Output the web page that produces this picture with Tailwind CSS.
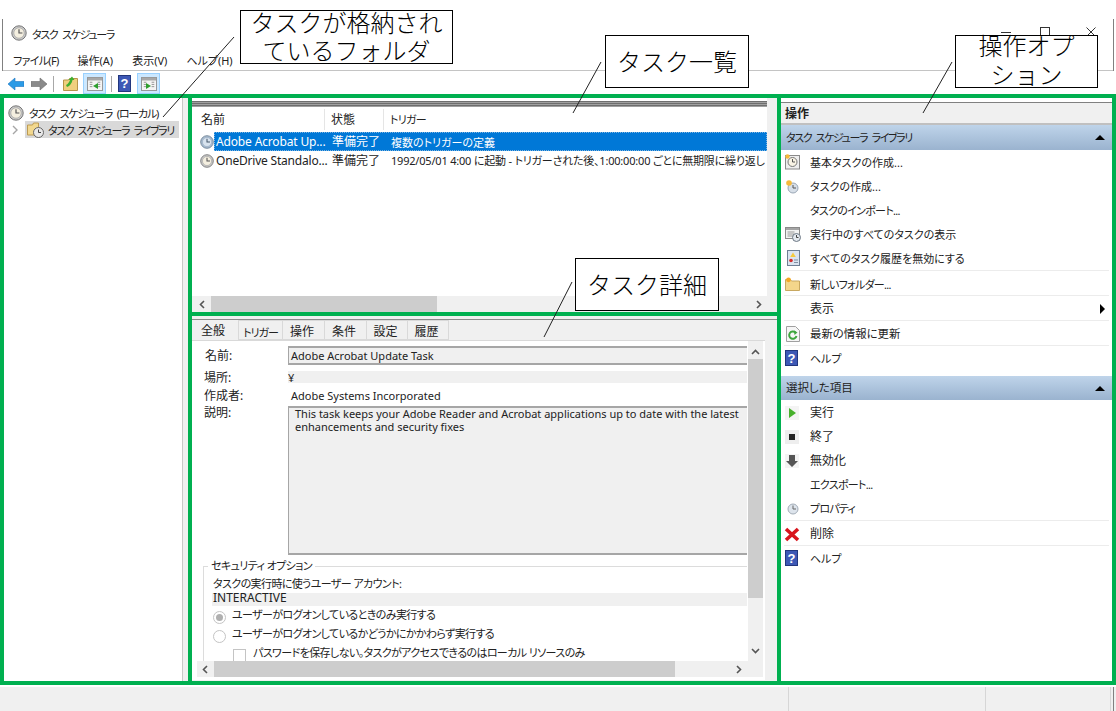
<!DOCTYPE html>
<html lang="ja">
<head>
  <meta charset="UTF-8">
  <title>タスク スケジューラ</title>
  <script src="https://cdn.jsdelivr.net/npm/@tailwindcss/browser@4"></script>
</head>
<body class="relative w-[1116px] h-[711px] overflow-hidden bg-white text-[11px] leading-none text-[#222] font-['Noto_Sans','Noto_Sans_CJK_JP',sans-serif] [font-feature-settings:'palt']">

  <!-- shared icons -->
  <svg class="hidden">
    <symbol id="clock" viewBox="0 0 16 16">
      <circle cx="8" cy="8" r="7.2" fill="#c9c9c9" stroke="#777"/>
      <circle cx="8" cy="8" r="5.2" fill="#f4efe0" stroke="#999" stroke-width=".6"/>
      <path d="M8 4.200V8h3.400" fill="none" stroke="#555" stroke-width="1.200"/>
    </symbol>
    <symbol id="clock-blue" viewBox="0 0 16 16">
      <circle cx="8" cy="8" r="7.2" fill="#a9bdd2" stroke="#6f8194"/>
      <circle cx="8" cy="8" r="5.2" fill="#d8e3ee" stroke="#8fa3b8" stroke-width=".6"/>
      <path d="M8 4.200V8h3.400" fill="none" stroke="#46586b" stroke-width="1.200"/>
    </symbol>
    <symbol id="pane" viewBox="0 0 18 16">
      <rect x=".5" y=".5" width="17" height="15" fill="#f4f4f4" stroke="#8c8c8c"/>
      <rect x="1" y="1" width="16" height="3" fill="#a8a8a8"/>
      <path d="M3 6h3M3 8.500h3M3 11h3M12 6h3M12 8.500h3M12 11h3" stroke="#8a8a8a"/>
    </symbol>
  </svg>

  <!-- title + menu -->
  <div class="mt-[19px] mx-[2px] border-x border-[#808080]">
    <div class="h-[28px] pl-[8px] flex items-center gap-[5px]">
      <svg class="w-[16px] h-[16px]"><use href="#clock"/></svg>
      <span class="pt-[2px] tracking-[-1.3px] [word-spacing:3px]">タスク スケジューラ</span>
      <div class="ml-auto mr-[17px] mb-[2px] flex items-center">
        <div class="w-[10px] h-px bg-[#333]"></div>
        <div class="ml-[29px] w-[10px] h-[10px] border border-[#333]"></div>
        <svg class="ml-[36px] w-[10px] h-[10px]" viewBox="0 0 10 10"><path d="M.5.500l9 9M9.500.500l-9 9" stroke="#333"/></svg>
      </div>
    </div>
    <div class="h-[24px] pl-[10px] pt-[3px] flex items-center gap-[19px] border-b border-[#c4c4c4]">
      <span class="tracking-[-0.7px]">ファイル(F)</span><span>操作(A)</span><span>表示(V)</span><span>ヘルプ(H)</span>
    </div>
  </div>

  <!-- toolbar -->
  <div class="h-[24px] pl-[8px] pt-px flex items-center">
    <svg class="w-[16px] h-[14px]" viewBox="0 0 16 14"><path d="M0 7l7-6v3.500h9v5H7V13z" fill="#2c9be6" stroke="#1c74c0" stroke-width=".6"/></svg>
    <svg class="w-[16px] h-[14px] ml-[7px]" viewBox="0 0 16 14"><path d="M16 7L9 1v3.500H0v5h9V13z" fill="#8a8a8a" stroke="#6c6c6c" stroke-width=".6"/></svg>
    <div class="w-px h-[16px] bg-[#a8a8a8] ml-[6px]"></div>
    <svg class="w-[15px] h-[15px] ml-[9px]" viewBox="0 0 15 15"><path d="M.5 4h5l1-1.500h8V14.500H.5z" fill="#f0cf7e" stroke="#b8944a"/><path d="M3 9c2-1 3-2.500 4-5L5.500 4 9 .5 11.500 4 9.500 4C9 7 7 10 4 11z" fill="#3fae2f"/></svg>
    <div class="ml-[5px] w-[23px] h-[21px] bg-[#cce8ff] border border-[#99d1ff] flex items-center justify-center relative">
      <svg class="w-[16px] h-[14px]"><use href="#pane"/></svg>
      <div class="absolute w-0 h-0 border-y-[3px] border-y-transparent border-r-[5px] border-r-[#2d9e2d] left-[9px] top-[9px]"></div>
    </div>
    <div class="w-px h-[16px] bg-[#a8a8a8] ml-[5px]"></div>
    <div class="ml-[6px] w-[13px] h-[17px] bg-[#3d58b5] border border-[#22367d] flex items-center justify-center text-white text-[13px] font-bold font-['Liberation_Sans',sans-serif]">?</div>
    <div class="ml-[6px] w-[23px] h-[21px] bg-[#cce8ff] border border-[#99d1ff] flex items-center justify-center relative">
      <svg class="w-[16px] h-[14px]"><use href="#pane"/></svg>
      <div class="absolute w-0 h-0 border-y-[3px] border-y-transparent border-l-[5px] border-l-[#2d9e2d] left-[8px] top-[9px]"></div>
    </div>
  </div>

  <!-- main panes -->
  <div class="h-[590px] flex bg-[#f0f0f0]">

    <!-- folder tree -->
    <div class="w-[188px] shrink-0">
      <div class="w-[183px] h-full bg-white pt-[9px] border-r border-[#c8c8c8] whitespace-nowrap">
        <div class="h-[17px] pl-[8px] flex items-center gap-[5px]">
          <svg class="w-[16px] h-[16px] shrink-0"><use href="#clock"/></svg>
          <span class="pt-[2px] tracking-[-1.2px] [word-spacing:3px]">タスク スケジューラ (ローカル)</span>
        </div>
        <div class="h-[17px] flex items-center">
          <svg class="w-[6px] h-[10px] ml-[12px] shrink-0" viewBox="0 0 6 10"><path d="M1 1l4 4-4 4" fill="none" stroke="#a6a6a6" stroke-width="1.400"/></svg>
          <div class="ml-[7px] w-[154px] h-[17px] bg-[#d9d9d9] flex items-center pl-[2px] gap-[4px]">
            <svg class="w-[17px] h-[16px] shrink-0" viewBox="0 0 17 16"><path d="M.5 3h5l1-2h5v12H.5z" fill="#f2d88f" stroke="#bd9b52"/><circle cx="11.500" cy="10.500" r="5" fill="#e8e8e8" stroke="#666"/><path d="M11.500 7.500v3h2.500" fill="none" stroke="#444"/></svg>
            <span class="pt-[2px] tracking-[-1.4px] [word-spacing:3px]">タスク スケジューラ ライブラリ</span>
          </div>
        </div>
      </div>
    </div>

    <!-- center -->
    <div class="w-[590px] shrink-0 flex flex-col pl-[4px]">
      <!-- task list -->
      <div class="w-[575px] h-[217px] shrink-0 bg-white flex flex-col overflow-hidden">
        <div class="h-[6px] mt-[6px] shrink-0 bg-[repeating-linear-gradient(#6e6e6e_0,#6e6e6e_1px,#a0a0a0_1px,#a0a0a0_2px)]"></div>
        <div class="h-[23px] shrink-0 pt-[2px] flex items-center text-[12px]">
          <div class="w-[133px] h-full pl-[9px] flex items-center border-r border-[#e5e5e5]">名前</div>
          <div class="w-[59px] h-full pl-[6px] flex items-center border-r border-[#e5e5e5]">状態</div>
          <div class="pl-[6px] text-[11px] tracking-[-0.7px]">トリガー</div>
        </div>
        <div class="h-[19px] mt-[2px] shrink-0 flex items-center whitespace-nowrap">
          <svg class="w-[14px] h-[14px] ml-[8px] shrink-0"><use href="#clock-blue"/></svg>
          <div class="flex-1 h-full pt-px flex items-center bg-[#0078d7] text-white outline-1 outline-dotted -outline-offset-1 outline-[#7fb4e0]">
            <div class="w-[118px] shrink-0 pl-[2px] text-[12px] tracking-[-0.15px]">Adobe Acrobat Up...</div>
            <div class="w-[59px] shrink-0 text-[12px]">準備完了</div>
            <div>複数のトリガーの定義</div>
          </div>
        </div>
        <div class="h-[19px] shrink-0 flex items-center whitespace-nowrap">
          <svg class="w-[14px] h-[14px] ml-[8px] shrink-0"><use href="#clock"/></svg>
          <div class="w-[118px] shrink-0 pl-[2px] text-[12px] tracking-[-0.2px]">OneDrive Standalo...</div>
          <div class="w-[59px] shrink-0 text-[12px]">準備完了</div>
          <div class="w-[377px] shrink-0 overflow-hidden tracking-[-0.2px]">1992/05/01 4:00 に起動 - トリガーされた後、1:00:00:00 ごとに無期限に繰り返し</div>
        </div>
        <div class="flex-1"></div>
        <!-- list scrollbar -->
        <div class="h-[16px] shrink-0 bg-[#f0f0f0] flex items-center">
          <svg class="w-[6px] h-[9px] ml-[7px]" viewBox="0 0 6 9"><path d="M5 1L1.500 4.500 5 8" fill="none" stroke="#555" stroke-width="1.600"/></svg>
          <div class="ml-[6px] w-[226px] h-full bg-[#cdcdcd]"></div>
          <svg class="w-[6px] h-[9px] ml-auto mr-[5px]" viewBox="0 0 6 9"><path d="M1 1l3.500 3.500L1 8" fill="none" stroke="#555" stroke-width="1.600"/></svg>
        </div>
      </div>

      <div class="h-[8px] shrink-0 border-b border-[#8a8a8a]"></div>

      <!-- task detail -->
      <div class="w-[573px] h-[360px] shrink-0 bg-white flex flex-col overflow-hidden">
        <div class="h-[21px] shrink-0 bg-[#f0f0f0] flex items-stretch text-center text-[12px] border-b border-[#d9d9d9]">
          <div class="w-[46px] pt-[5px] pr-[4px]">全般</div>
          <div class="w-[45px] pt-[6px] border border-[#d9d9d9] text-[11px] tracking-[-1px]">トリガー</div>
          <div class="w-[42px] pt-[5px] pr-[3px] border-y border-r border-[#d9d9d9]">操作</div>
          <div class="w-[42px] pt-[5px] pr-[3px] border-y border-r border-[#d9d9d9]">条件</div>
          <div class="w-[41px] pt-[5px] pr-[3px] border-y border-r border-[#d9d9d9]">設定</div>
          <div class="w-[41px] pt-[5px] pr-[3px] border-y border-r border-[#d9d9d9]">履歴</div>
        </div>
        <div class="h-[320px] shrink-0 flex overflow-hidden">
          <!-- form -->
          <div class="w-[556px] shrink-0 overflow-hidden">
            <div class="mt-[5px] h-[19px] flex items-center">
              <div class="w-[96px] pl-[13px] pt-px shrink-0 text-[12px]">名前:</div>
              <div class="w-[459px] h-full bg-[#f0f0f0] border-y-2 border-l border-[#a6a6a6] pl-[2px] flex items-center">Adobe Acrobat Update Task</div>
            </div>
            <div class="mt-[6px] h-[12px] flex items-center">
              <div class="w-[96px] pl-[12px] pt-[2px] shrink-0 text-[12px]">場所:</div>
              <div class="w-[459px] h-full bg-[#f0f0f0] flex items-center">¥</div>
            </div>
            <div class="mt-[6px] h-[12px] flex items-center">
              <div class="w-[96px] pl-[12px] pt-px shrink-0 text-[12px]">作成者:</div>
              <div class="pl-[3px]">Adobe Systems Incorporated</div>
            </div>
            <div class="mt-[5px] h-[149px] flex">
              <div class="w-[96px] pl-[12px] pt-px shrink-0 text-[12px]">説明:</div>
              <div class="w-[459px] h-full bg-[#f0f0f0] border-y-2 border-l border-[#a6a6a6] pl-[6px] leading-[13px]"><p class="-mt-px">This task keeps your Adobe Reader and Acrobat applications up to date with the latest enhancements and security fixes</p></div>
            </div>
            <!-- security options -->
            <div class="mt-[11px] ml-[11px] w-[544px] h-[105px] border-t border-l border-[#dcdcdc] tracking-[-0.6px]">
              <div class="-mt-[7px] ml-[4px] w-fit bg-white px-[3px] pb-[2px] h-[13px] flex items-center">セキュリティ オプション</div>
              <div class="mt-[4px] ml-[9px] h-[12px] flex items-center">タスクの実行時に使うユーザー アカウント:</div>
              <div class="mt-[4px] ml-[8px] h-[13px] bg-[#f0f0f0] pl-[1px] pb-[4px] flex items-center text-[12px] tracking-normal">INTERACTIVE</div>
              <div class="mt-[5px] ml-[9px] h-[13px] flex items-center gap-[6px]">
                <div class="w-[13px] h-[13px] rounded-full border border-[#c4c4c4] flex items-center justify-center"><div class="w-[7px] h-[7px] rounded-full bg-[#b0b0b0]"></div></div>
                <span class="pb-[6px]">ユーザーがログオンしているときのみ実行する</span>
              </div>
              <div class="mt-[6px] ml-[9px] h-[13px] flex items-center gap-[6px]">
                <div class="w-[13px] h-[13px] rounded-full border border-[#c4c4c4]"></div>
                <span class="pb-[6px]">ユーザーがログオンしているかどうかにかかわらず実行する</span>
              </div>
              <div class="mt-[4px] ml-[29px] h-[12px] flex items-center gap-[7px] whitespace-nowrap">
                <div class="w-[13px] h-[13px] mt-[4px] border border-[#c4c4c4]"></div>
                <span class="pb-[2px]">パスワードを保存しない。タスクがアクセスできるのはローカル リソースのみ</span>
              </div>
            </div>
          </div>
          <!-- detail v-scrollbar -->
          <div class="w-[15px] shrink-0 bg-[#f0f0f0] flex flex-col items-center">
            <svg class="w-[9px] h-[6px] mt-[8px]" viewBox="0 0 9 6"><path d="M1 5l3.500-3.500L8 5" fill="none" stroke="#555" stroke-width="1.600"/></svg>
            <div class="mt-[4px] w-full h-[239px] bg-[#cdcdcd]"></div>
            <svg class="w-[9px] h-[6px] mt-auto mb-[7px]" viewBox="0 0 9 6"><path d="M1 1l3.500 3.500L8 1" fill="none" stroke="#555" stroke-width="1.600"/></svg>
          </div>
        </div>
        <!-- detail h-scrollbar -->
        <div class="ml-[5px] w-[566px] h-[16px] shrink-0 bg-[#f0f0f0] flex items-center">
          <svg class="w-[6px] h-[9px] ml-[5px]" viewBox="0 0 6 9"><path d="M5 1L1.500 4.500 5 8" fill="none" stroke="#555" stroke-width="1.600"/></svg>
          <div class="ml-[6px] w-[461px] h-full bg-[#cdcdcd]"></div>
          <svg class="w-[6px] h-[9px] ml-auto mr-[21px]" viewBox="0 0 6 9"><path d="M1 1l3.500 3.500L1 8" fill="none" stroke="#555" stroke-width="1.600"/></svg>
        </div>
      </div>
    </div>

    <!-- actions -->
    <div class="flex-1 bg-white pl-[3px] pr-[4px]">
      <div class="h-[7px]"></div>
      <div class="h-[23px] bg-[#f0f0f0] border-t border-[#808080] border-b-2 border-b-[#c0c0c0] flex items-center pl-[4px] pt-[2px] font-bold text-[12px]">操作</div>
      <div class="h-[25px] bg-gradient-to-b from-[#bfd4ea] to-[#9ab3cf] flex items-center pl-[5px] pr-[7px]">
        <span class="tracking-[-1.4px] [word-spacing:3px]">タスク スケジューラ ライブラリ</span>
        <div class="ml-auto w-0 h-0 border-x-[5px] border-x-transparent border-b-[5px] border-b-black"></div>
      </div>

      <div class="h-6 flex items-center pl-[4px]"><div class="w-[25px]">
        <svg class="w-[15px] h-[16px]" viewBox="0 0 15 16"><rect x=".5" y="1.500" width="14" height="13.500" fill="#eee" stroke="#8a8a8a"/><circle cx="7.500" cy="8" r="4.500" fill="#f8f3e4" stroke="#777"/><path d="M7.500 5v3h2.500" fill="none" stroke="#555"/><circle cx="2.500" cy="2.500" r="2.200" fill="#f6b93b"/></svg>
      </div>基本タスクの作成...</div>
      <div class="h-6 flex items-center pl-[4px]"><div class="w-[25px]">
        <svg class="w-[15px] h-[15px]" viewBox="0 0 15 15"><circle cx="8" cy="9" r="5" fill="#d7dfe8" stroke="#9aa7b5"/><path d="M8 6v3h3" fill="none" stroke="#555"/><circle cx="4" cy="4" r="2.800" fill="#f6b93b"/></svg>
      </div>タスクの作成...</div>
      <div class="h-6 flex items-center pl-[29px] tracking-[-0.7px]">タスクのインポート...</div>
      <div class="h-6 flex items-center pl-[4px]"><div class="w-[25px]">
        <svg class="w-[16px] h-[16px]" viewBox="0 0 16 16"><rect x=".5" y="1.500" width="14" height="11" fill="#f2f2f2" stroke="#8a8a8a"/><rect x="1" y="2" width="13" height="2" fill="#a5a5a5"/><path d="M2.500 6h7M2.500 8h7M2.500 10h7" stroke="#9a9a9a"/><circle cx="11.500" cy="11.500" r="4" fill="#e3e8ee" stroke="#6d7884"/><path d="M11.500 9v2.500h2" fill="none" stroke="#444"/></svg>
      </div>実行中のすべてのタスクの表示</div>
      <div class="h-6 flex items-center pl-[4px]"><div class="w-[25px]">
        <svg class="w-[14px] h-[16px] ml-[1px]" viewBox="0 0 14 16"><rect x="1.500" y=".5" width="12" height="15" fill="#dbe4f0" stroke="#6e7f94"/><path d="M7 2.500l2.800 4.500H4.200z" fill="#f5cb3f"/><circle cx="5" cy="10.500" r="1.800" fill="#d62d2d"/><path d="M8 10h4M8 12.500h4" stroke="#7f8fa3"/></svg>
      </div>すべてのタスク履歴を無効にする</div>
      <div class="h-px mx-[3px] bg-[#ececec]"></div>
      <div class="h-6 pt-[2px] flex items-center pl-[4px]"><div class="w-[25px]">
        <svg class="w-[15px] h-[14px]" viewBox="0 0 15 14"><path d="M.5 2.500h5l1 1.500h8v9.500H.5z" fill="#f4d68b" stroke="#c8a860"/><circle cx="3.500" cy="2.800" r="2.400" fill="#f5a623"/></svg>
      </div><span class="tracking-[-0.7px]">新しいフォルダー...</span></div>
      <div class="h-px mx-[3px] bg-[#ececec]"></div>
      <div class="h-6 pt-[2px] flex items-center pl-[29px] pr-[7px] text-[12px]">表示
        <div class="ml-auto w-0 h-0 border-y-[5px] border-y-transparent border-l-[5px] border-l-black"></div>
      </div>
      <div class="h-px mx-[3px] bg-[#ececec]"></div>
      <div class="h-6 pt-[2px] flex items-center pl-[4px]"><div class="w-[25px]">
        <svg class="w-[14px] h-[16px] ml-[1px]" viewBox="0 0 14 16"><path d="M.5.500h9l4 4v11H.5z" fill="#f6f6f6" stroke="#a0a0a0"/><path d="M10.500 10A3.700 3.700 0 1 1 9.500 6.500" fill="none" stroke="#3da53d" stroke-width="2"/><path d="M8 4.500l3.500 2L8.500 9z" fill="#3da53d"/></svg>
      </div><span class="text-[11.4px]">最新の情報に更新</span></div>
      <div class="h-px mx-[3px] bg-[#ececec]"></div>
      <div class="h-6 flex items-center pl-[4px]"><div class="w-[25px]">
        <div class="w-[13px] h-[16px] bg-[#3d58b5] border border-[#22367d] flex items-center justify-center text-white text-[13px] font-bold font-['Liberation_Sans',sans-serif]">?</div>
      </div>ヘルプ</div>

      <div class="mt-[6px] h-[24px] bg-gradient-to-b from-[#bfd4ea] to-[#9ab3cf] flex items-center pl-[5px] pr-[7px]">
        <span class="text-[11.5px]">選択した項目</span>
        <div class="ml-auto w-0 h-0 border-x-[5px] border-x-transparent border-b-[5px] border-b-black"></div>
      </div>
      <div class="h-6 pt-[2px] flex items-center pl-[4px] text-[12px]"><div class="w-[25px]">
        <div class="w-[14px] h-[14px] bg-[#f4f4f4] flex items-center justify-center"><div class="w-0 h-0 border-y-[5px] border-y-transparent border-l-[7px] border-l-[#47b02c]"></div></div>
      </div>実行</div>
      <div class="h-6 pt-[2px] flex items-center pl-[4px] text-[12px]"><div class="w-[25px]">
        <div class="w-[14px] h-[14px] bg-[#eeeeee] flex items-center justify-center"><div class="w-[6px] h-[6px] bg-[#222]"></div></div>
      </div>終了</div>
      <div class="h-6 pt-[2px] flex items-center pl-[4px] text-[12px]"><div class="w-[25px]">
        <svg class="w-[14px] h-[14px] bg-[#f4f4f4]" viewBox="0 0 14 14"><path d="M4 1h6v6h3l-6 6-6-6h3z" fill="#555"/></svg>
      </div>無効化</div>
      <div class="h-6 flex items-center pl-[29px] tracking-[-0.7px]">エクスポート...</div>
      <div class="h-6 flex items-center pl-[4px]"><div class="w-[25px]">
        <svg class="w-[12px] h-[12px] ml-[2px] mt-[2px]" viewBox="0 0 12 12"><circle cx="6" cy="6" r="5" fill="#dde4ec" stroke="#a3adb8"/><path d="M6 2.500V6h3" fill="none" stroke="#666"/></svg>
      </div><span class="tracking-[-0.8px]">プロパティ</span></div>
      <div class="h-px mx-[3px] bg-[#ececec]"></div>
      <div class="h-6 pt-[2px] flex items-center pl-[4px] text-[12px]"><div class="w-[25px]">
        <svg class="w-[16px] h-[15px] -ml-[1px]" viewBox="0 0 16 15"><path d="M2 2l12 11M14 2L2 13" stroke="#d8141c" stroke-width="3.600"/></svg>
      </div>削除</div>
      <div class="h-px mx-[3px] bg-[#ececec]"></div>
      <div class="h-6 flex items-center pl-[4px]"><div class="w-[25px]">
        <div class="w-[13px] h-[16px] bg-[#3d58b5] border border-[#22367d] flex items-center justify-center text-white text-[13px] font-bold font-['Liberation_Sans',sans-serif]">?</div>
      </div>ヘルプ</div>
    </div>
  </div>

  <!-- status bar -->
  <div class="h-[26px] pt-[2px] bg-white">
    <div class="h-full bg-[#f0f0f0] flex">
      <div class="w-[789px] border-r border-[#d6d6d6]"></div>
      <div class="w-[197px] border-r border-[#d6d6d6]"></div>
      <div class="w-[125px] border-r border-[#d6d6d6]"></div>
      <div class="w-[1px] ml-[2px] bg-[#808080]"></div>
    </div>
  </div>

  <!-- annotation: green frames -->
  <div class="absolute left-0 top-[94px] w-[192px] h-[591px] border-4 border-[#00b050]"></div>
  <div class="absolute left-[188px] top-[94px] w-[593px] h-[222px] border-4 border-[#00b050]"></div>
  <div class="absolute left-[188px] top-[312px] w-[593px] h-[373px] border-4 border-[#00b050]"></div>
  <div class="absolute left-[777px] top-[94px] w-[339px] h-[591px] border-4 border-[#00b050]"></div>

  <!-- annotation: leader lines -->
  <svg class="absolute left-0 top-0 w-[1116px] h-[711px]" viewBox="0 0 1116 711" fill="none" stroke="#222" stroke-width="1">
    <path d="M234 37L163 117"/>
    <path d="M601 62L573 113"/>
    <path d="M572 282L544 337"/>
    <path d="M952 62L923 113"/>
  </svg>

  <!-- annotation: callouts -->
  <div class="absolute left-[240px] top-[10px] w-[213px] h-[54px] bg-white border-[1.5px] border-black flex items-center justify-center text-center text-[24px] leading-[28px] font-light text-black [font-feature-settings:normal]">タスクが格納され<br>ているフォルダ</div>
  <div class="absolute left-[605px] top-[35px] w-[144px] h-[53px] bg-white border-[1.5px] border-black flex items-center justify-center text-[24px] font-light text-black [font-feature-settings:normal]">タスク一覧</div>
  <div class="absolute left-[575px] top-[258px] w-[144px] h-[53px] bg-white border-[1.5px] border-black flex items-center justify-center text-[24px] font-light text-black [font-feature-settings:normal]">タスク詳細</div>
  <div class="absolute left-[955px] top-[35px] w-[143px] h-[53px] bg-white border-[1.5px] border-black flex items-center justify-center text-center pb-[4px] text-[24px] leading-[29px] font-light text-black [font-feature-settings:normal]">操作オプ<br>ション</div>
</body>
</html>
